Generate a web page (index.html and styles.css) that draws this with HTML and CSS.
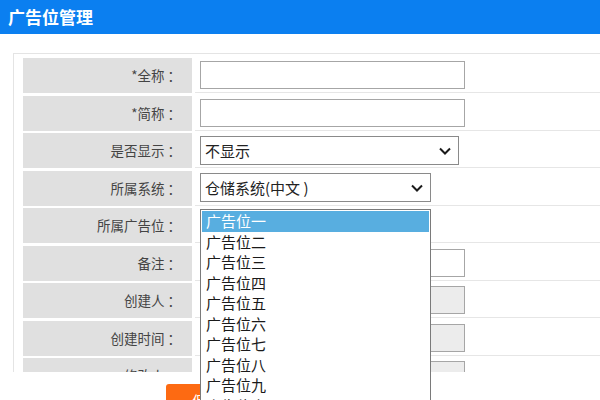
FILE: index.html
```html
<!DOCTYPE html>
<html lang="zh-CN">
<head>
<meta charset="utf-8">
<title>广告位管理</title>
<link rel="stylesheet" href="styles.css">
</head>
<body>
<div class="header">广告位管理</div>
<div class="main">
  <div class="frame">
    <div class="form">
      <div class="label">*全称<span class="colon">：</span></div>
      <div class="value"><input class="text" type="text"></div>
      <div class="label">*简称<span class="colon">：</span></div>
      <div class="value"><input class="text" type="text"></div>
      <div class="label">是否显示<span class="colon">：</span></div>
      <div class="value">
        <div class="select wide"><span>不显示</span>
          <svg class="chev" width="12" height="8" viewBox="0 0 12 8"><polyline points="1,1.5 6,6.5 11,1.5" fill="none" stroke="#1a1a1a" stroke-width="2"/></svg>
        </div>
      </div>
      <div class="label">所属系统<span class="colon">：</span></div>
      <div class="value">
        <div class="select narrow"><span>仓储系统(中文 )</span>
          <svg class="chev" width="12" height="8" viewBox="0 0 12 8"><polyline points="1,1.5 6,6.5 11,1.5" fill="none" stroke="#1a1a1a" stroke-width="2"/></svg>
        </div>
      </div>
      <div class="label">所属广告位<span class="colon">：</span></div>
      <div class="value">
        <div class="select narrow"><span>广告位一</span></div>
      </div>
      <div class="label">备注<span class="colon">：</span></div>
      <div class="value"><input class="text" type="text"></div>
      <div class="label">创建人<span class="colon">：</span></div>
      <div class="value"><input class="text readonly" type="text" readonly></div>
      <div class="label">创建时间<span class="colon">：</span></div>
      <div class="value"><input class="text readonly" type="text" readonly></div>
      <div class="label">修改人<span class="colon">：</span></div>
      <div class="value"><input class="text readonly" type="text" readonly></div>
      <div class="label">修改时间<span class="colon">：</span></div>
      <div class="value"><input class="text readonly" type="text" readonly></div>
    </div>
  </div>
  <div class="actions"><button class="btn" type="button">保存</button></div>
  <ul class="popup">
    <li class="active">广告位一</li>
    <li>广告位二</li>
    <li>广告位三</li>
    <li>广告位四</li>
    <li>广告位五</li>
    <li>广告位六</li>
    <li>广告位七</li>
    <li>广告位八</li>
    <li>广告位九</li>
    <li>广告位十</li>
  </ul>
</div>
</body>
</html>
```
FILE: styles.css
```css
html, body {
  margin: 0;
  padding: 0;
  background: #ffffff;
  overflow: hidden;
  font-family: "Noto Sans CJK SC", "Noto Sans", sans-serif;
}

.header {
  height: 34px;
  line-height: 34px;
  background: #0b7ff0;
  color: #ffffff;
  font-size: 17px;
  font-weight: bold;
  padding-left: 8px;
}

.main {
  position: relative;
  padding: 19px 0 0 13px;
}

.frame {
  width: 620px;
  height: 319px;
  border: 1px solid #e4e4e4;
  border-bottom: none;
  overflow: hidden;
  padding: 4px 0 0 9px;
  box-sizing: border-box;
}

.form {
  display: grid;
  grid-template-columns: 169px 1fr;
  column-gap: 3px;
  row-gap: 2.5px;
}

.label {
  height: 35px;
  background: #e0e0e0;
  color: #444444;
  font-size: 13.5px;
  text-align: right;
  padding-right: 11px;
  line-height: 35px;
  box-sizing: border-box;
}

.colon {
  margin-left: 3px;
  font-family: "Noto Sans CJK TC", "Noto Sans CJK SC", sans-serif;
}

.value {
  height: 35px;
  border-bottom: 1px solid #e6e6e6;
  box-sizing: border-box;
  display: flex;
  align-items: center;
  padding-left: 5px;
}

.text {
  width: 265px;
  height: 28px;
  border: 1px solid #a6a6a6;
  box-sizing: border-box;
  margin: 0;
  background: #ffffff;
}

.text.readonly {
  background: #ececec;
}

.select {
  position: relative;
  height: 29px;
  border: 1px solid #8a8a8a;
  box-sizing: border-box;
  background: #ffffff;
  font-size: 15px;
  color: #222222;
  line-height: 27px;
  padding-left: 4px;
}

.select.wide { width: 259px; }
.select.narrow { width: 231px; }

.chev {
  position: absolute;
  right: 7px;
  top: 10px;
}

.actions {
  margin-top: 12px;
  padding-left: 153px;
}

.btn {
  width: 80px;
  height: 32px;
  border: none;
  border-radius: 3px;
  background: #fd6a12;
  color: #ffffff;
  font-family: "Noto Sans CJK SC", sans-serif;
  font-size: 14px;
}

.popup {
  position: absolute;
  left: 200px;
  top: 175px;
  width: 231px;
  height: 260px;
  margin: 0;
  padding: 1px;
  list-style: none;
  background: #ffffff;
  border: 1px solid #7a7a7a;
  box-sizing: border-box;
}

.popup li {
  height: 20.5px;
  line-height: 20.5px;
  font-size: 15px;
  color: #1a1a1a;
  padding-left: 4px;
}

.popup li.active {
  background: #58aee0;
  color: #ffffff;
}
```
